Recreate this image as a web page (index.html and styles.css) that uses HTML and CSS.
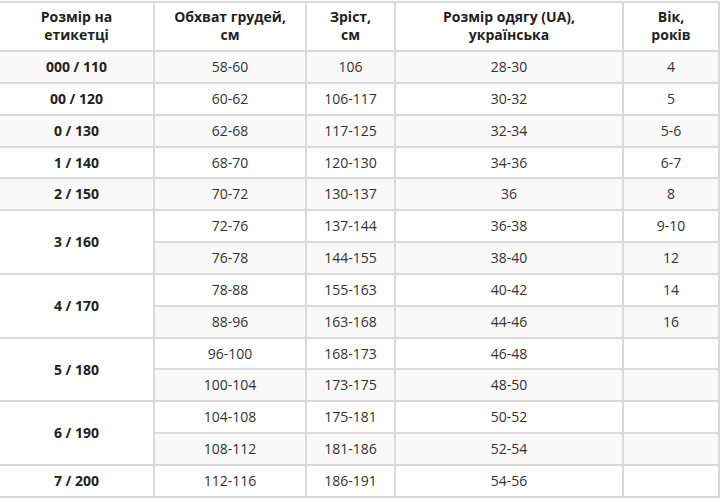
FILE: index.html
```html
<!DOCTYPE html>
<html lang="uk">
<head>
<meta charset="utf-8">
<title>Таблиця розмірів</title>
<link rel="stylesheet" href="styles.css">
</head>
<body>
<table class="sizes">
  <colgroup>
    <col class="c1"><col class="c2"><col class="c3"><col class="c4"><col class="c5">
  </colgroup>
  <thead>
    <tr>
      <th>Розмір на<br>етикетці</th>
      <th>Обхват грудей,<br>см</th>
      <th>Зріст,<br>см</th>
      <th>Розмір одягу (UA),<br>українська</th>
      <th>Вік,<br>років</th>
    </tr>
  </thead>
  <tbody>
    <tr><td class="lbl">000 / 110</td><td>58-60</td><td>106</td><td>28-30</td><td>4</td></tr>
    <tr><td class="lbl">00 / 120</td><td>60-62</td><td>106-117</td><td>30-32</td><td>5</td></tr>
    <tr><td class="lbl">0 / 130</td><td>62-68</td><td>117-125</td><td>32-34</td><td>5-6</td></tr>
    <tr><td class="lbl">1 / 140</td><td>68-70</td><td>120-130</td><td>34-36</td><td>6-7</td></tr>
    <tr><td class="lbl">2 / 150</td><td>70-72</td><td>130-137</td><td>36</td><td>8</td></tr>
    <tr><td class="lbl" rowspan="2">3 / 160</td><td>72-76</td><td>137-144</td><td>36-38</td><td>9-10</td></tr>
    <tr><td>76-78</td><td>144-155</td><td>38-40</td><td>12</td></tr>
    <tr><td class="lbl" rowspan="2">4 / 170</td><td>78-88</td><td>155-163</td><td>40-42</td><td>14</td></tr>
    <tr><td>88-96</td><td>163-168</td><td>44-46</td><td>16</td></tr>
    <tr><td class="lbl" rowspan="2">5 / 180</td><td>96-100</td><td>168-173</td><td>46-48</td><td></td></tr>
    <tr><td>100-104</td><td>173-175</td><td>48-50</td><td></td></tr>
    <tr><td class="lbl" rowspan="2">6 / 190</td><td>104-108</td><td>175-181</td><td>50-52</td><td></td></tr>
    <tr><td>108-112</td><td>181-186</td><td>52-54</td><td></td></tr>
    <tr><td class="lbl">7 / 200</td><td>112-116</td><td>186-191</td><td>54-56</td><td></td></tr>
  </tbody>
</table>
</body>
</html>
```

FILE: styles.css
```css
html, body {
  margin: 0;
  padding: 0;
  background: #fff;
}

body {
  padding-top: 1px;
  font-family: "Open Sans", "Liberation Sans", sans-serif;
  font-size: 14px;
  color: #333;
}

.sizes {
  border-collapse: collapse;
  table-layout: fixed;
  width: 719px;
}

.c1 { width: 154px; }
.c2 { width: 152px; }
.c3 { width: 89px; }
.c4 { width: 228px; }
.c5 { width: 96px; }

.sizes th,
.sizes td {
  border: 2px solid #dadada;
  text-align: center;
  vertical-align: middle;
  padding: 6px 4px;
  line-height: 17.85px;
}

.sizes th:first-child,
.sizes td.lbl {
  border-left: none;
}

.sizes th {
  font-weight: 700;
  color: #222;
  padding: 5px 4px 6px;
  line-height: 18px;
}

.sizes tbody tr:nth-of-type(odd) {
  background: #f9f9f9;
}

.sizes td.lbl {
  font-weight: 700;
  color: #222;
}
```
